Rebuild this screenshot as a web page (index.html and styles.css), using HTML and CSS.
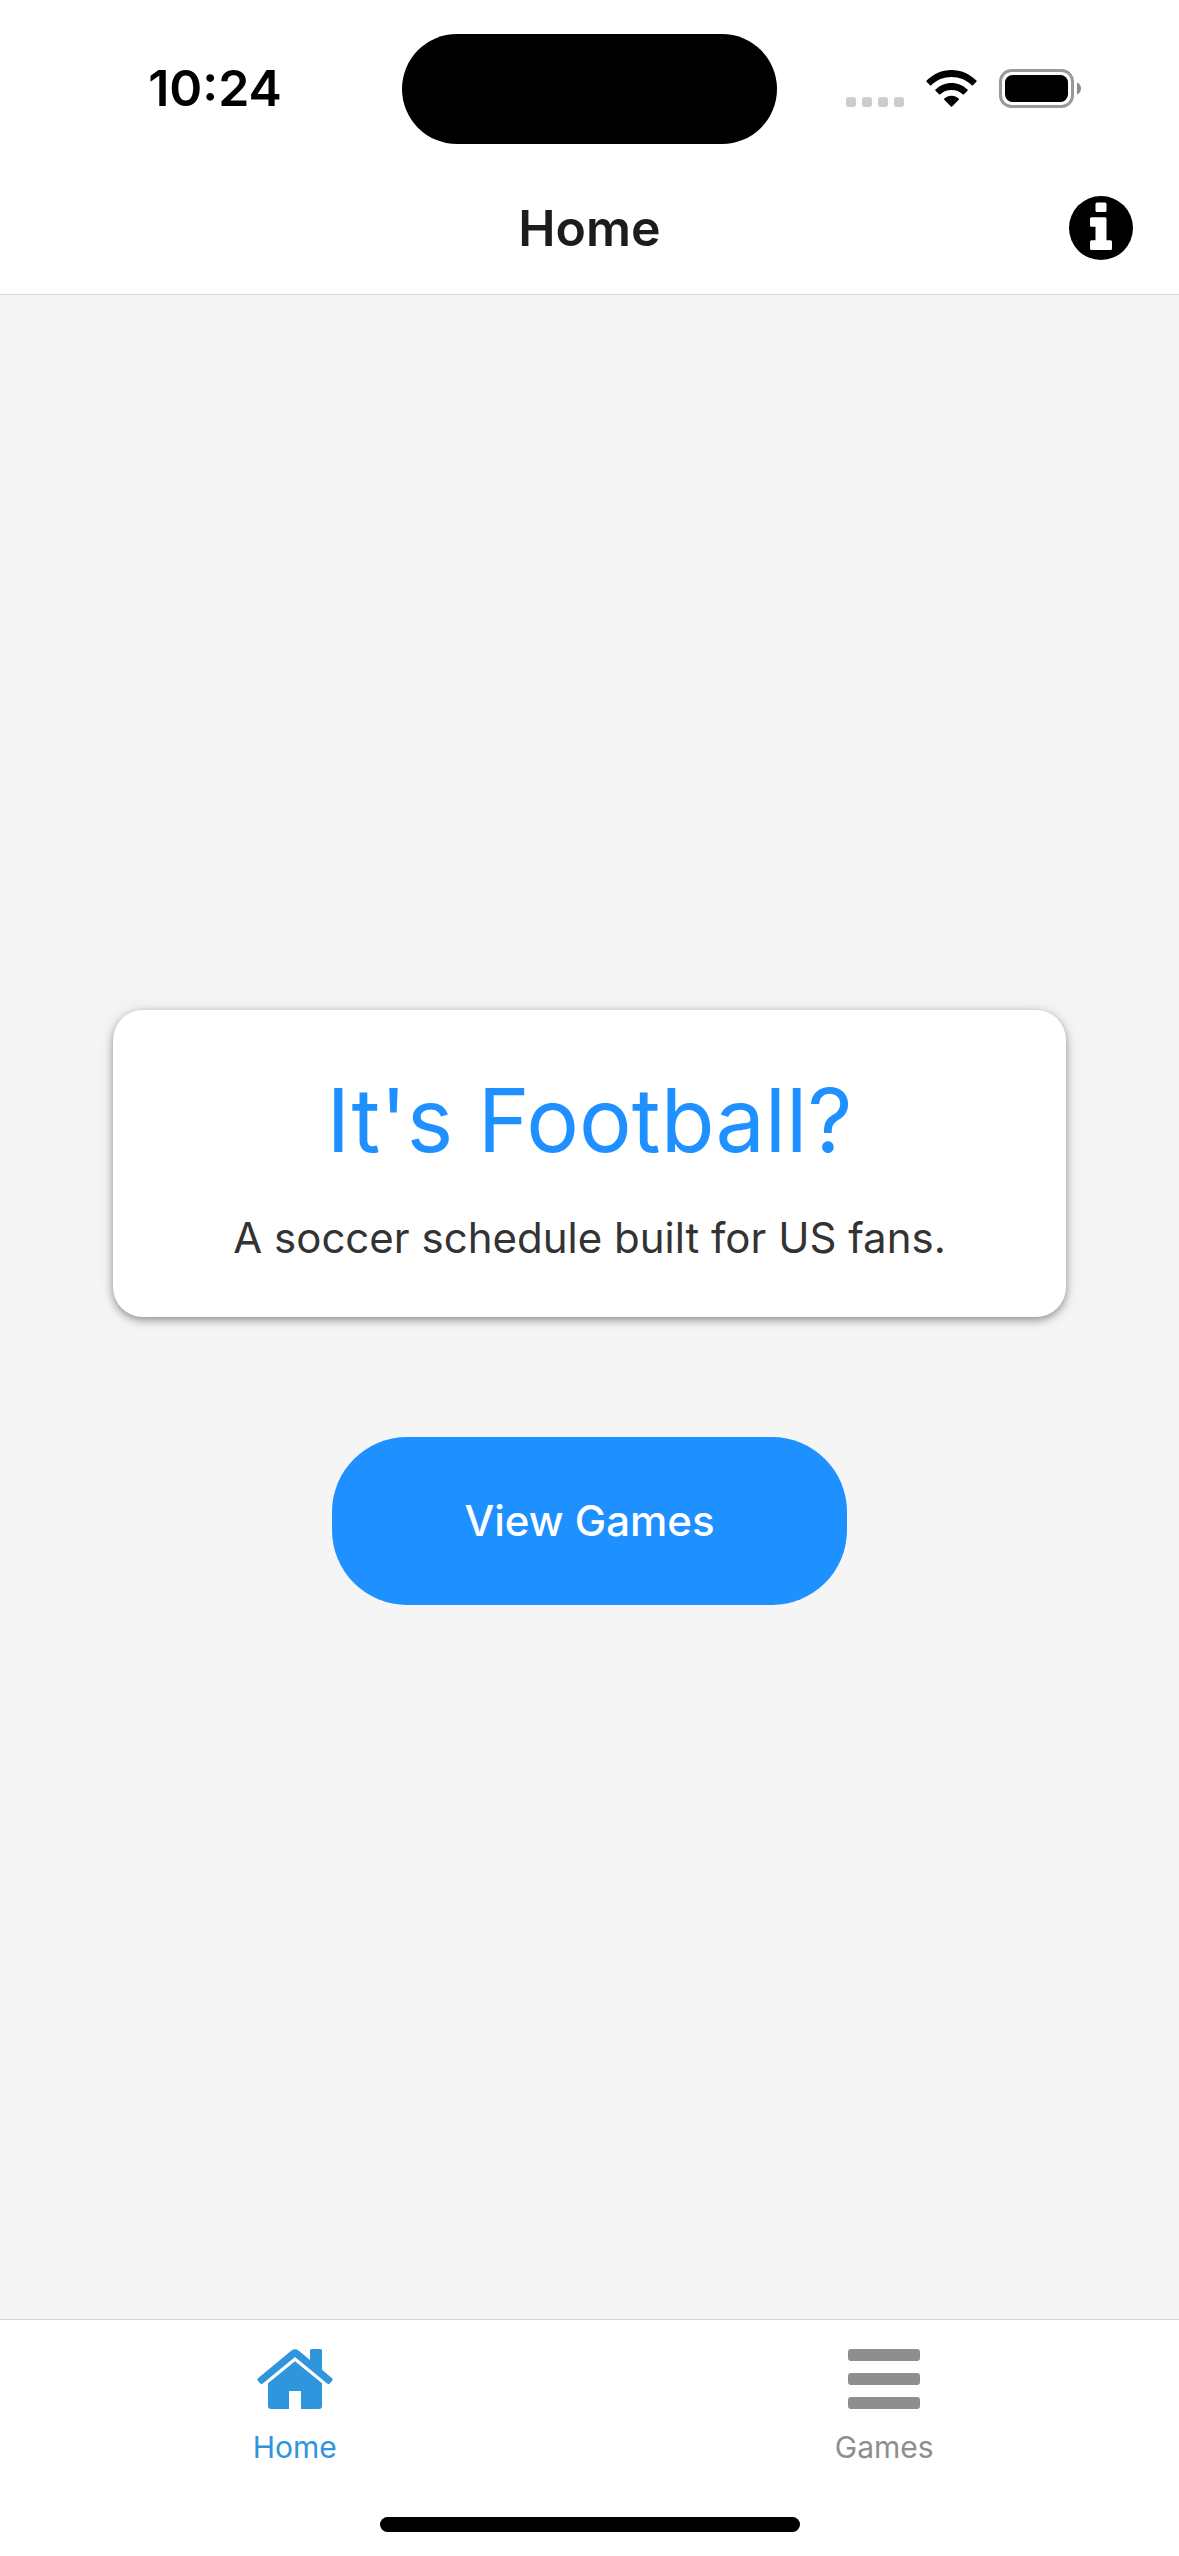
FILE: index.html
```html
<!DOCTYPE html>
<html lang="en">
<head>
<meta charset="utf-8">
<meta name="viewport" content="width=device-width, initial-scale=1">
<title>Home</title>
<link rel="stylesheet" href="styles.css">
</head>
<body>
<div class="app">
  <div class="status">
    <time class="status-time">10:24</time>
    <div class="island"></div>
    <div class="status-icons">
      <svg class="icon-signal" viewBox="0 0 58 37" aria-hidden="true">
        <g fill="#ccc">
          <rect x="0" y="27" width="10" height="10" rx="3"/>
          <rect x="16" y="27" width="10" height="10" rx="3"/>
          <rect x="32" y="27" width="10" height="10" rx="3"/>
          <rect x="48" y="27" width="10" height="10" rx="3"/>
        </g>
      </svg>
      <svg class="icon-wifi" viewBox="0 0 51 37" aria-hidden="true">
        <path d="M.6 10.6C7.300 4 16 0 25.500 0S43.700 4 50.400 10.600Q51 11.200 50.400 11.800L47 15.200Q46.400 15.800 45.700 15.200C40.300 10 33.200 7.100 25.500 7.100S10.700 10 5.300 15.200Q4.600 15.800 4 15.200L.6 11.800Q0 11.200.6 10.600Z"/>
        <path d="M9.500 19.500C13.700 15.400 19.300 12.900 25.500 12.900S37.300 15.400 41.500 19.500Q42.100 20.100 41.500 20.700L38 24.200Q37.400 24.800 36.700 24.200C33.800 21.500 29.900 20 25.500 20S17.200 21.500 14.300 24.200Q13.600 24.800 13 24.200L9.500 20.700Q8.900 20.100 9.500 19.500Z"/>
        <path d="M18.300 28.600C20.200 26.800 22.700 25.700 25.500 25.700S30.800 26.800 32.700 28.600Q33.300 29.200 32.700 29.800L26.100 36.600Q25.500 37.200 24.900 36.600L18.300 29.800Q17.700 29.200 18.300 28.600Z"/>
      </svg>
      <svg class="icon-battery" viewBox="0 0 82 39" aria-hidden="true">
        <rect x="1.500" y="1.500" width="72" height="36" rx="11" fill="none" stroke="#999" stroke-width="3"/>
        <rect x="6" y="6" width="63" height="27" rx="7.500"/>
        <path d="M78 13.500C80.500 14.500 82 16.800 82 19.500S80.500 24.500 78 25.500Z" fill="#8c8c8c"/>
      </svg>
    </div>
  </div>

  <header class="header">
    <h1 class="header-title">Home</h1>
    <button class="info" type="button" aria-label="Information">
      <svg class="icon-info" viewBox="0 0 64 64" aria-hidden="true">
        <circle cx="32" cy="32" r="32"/>
        <g fill="#fff">
          <rect x="26.500" y="6.500" width="11" height="9.500" rx="1.500"/>
          <path d="M22.500 21.300H36Q37.500 21.300 37.500 22.800V44.300H41.500Q43 44.300 43 45.800V52.500Q43 54 41.500 54H22.500Q21 54 21 52.500V45.800Q21 44.300 22.500 44.300H26.500V30.700H22.500Q21 30.700 21 29.200V22.800Q21 21.300 22.500 21.300Z"/>
        </g>
      </svg>
    </button>
  </header>

  <main class="main">
    <section class="card">
      <h2 class="card-title">It's Football?</h2>
      <p class="card-text">A soccer schedule built for US fans.</p>
    </section>
    <button class="view-games" type="button">View Games</button>
  </main>

  <nav class="tabs">
    <a class="tab tab-active" href="#home" aria-current="page">
      <svg class="icon-home" viewBox="0 0 76 60" fill="currentColor" aria-hidden="true">
        <path d="M11 34.300 38 12.300 65 34.300V57Q65 60 62 60H44V42H32V60H14Q11 60 11 57Z"/>
        <path d="M34.500 1.500Q38 -1.200 41.500 1.500L53 11V1.500Q53 0 54.500 0H63.500Q65 0 65 1.500V20.800L75 29.300Q76.200 30.400 75.200 31.700L72.600 34.500Q71.500 35.600 70.200 34.600L38 8 5.800 34.600Q4.500 35.600 3.400 34.500L.8 31.700Q-.2 30.400 1 29.300Z"/>
      </svg>
      <span>Home</span>
    </a>
    <a class="tab" href="#games">
      <svg class="icon-games" viewBox="0 0 72 60" fill="currentColor" aria-hidden="true">
        <rect width="72" height="12" rx="3"/>
        <rect y="24" width="72" height="12" rx="3"/>
        <rect y="48" width="72" height="12" rx="3"/>
      </svg>
      <span>Games</span>
    </a>
  </nav>
  <div class="home-bar"></div>
</div>
</body>
</html>
```

FILE: styles.css
```css
* {
  box-sizing: border-box;
}

body {
  margin: 0;
  background: #fff;
  font-family: Inter, "Liberation Sans", sans-serif;
}

h1, h2, p {
  margin: 0;
}

button {
  border: 0;
  font-family: inherit;
  cursor: pointer;
}

svg {
  display: block;
}

.app {
  display: flex;
  flex-direction: column;
  min-height: 100vh;
}

.status {
  display: grid;
  grid-template-columns: 1fr auto 1fr;
  align-items: center;
  padding: 34px 28px 0;
}

.status-time {
  padding-bottom: 2px;
  text-align: center;
  font-size: 50px;
  font-weight: 600;
  line-height: 60px;
}

.island {
  width: 375px;
  height: 110px;
  border-radius: 55px;
  background: #000;
}

.status-icons {
  display: flex;
  justify-content: flex-end;
  align-items: center;
  gap: 22px;
  padding: 0 70px 2px 0;
}

.icon-signal {
  width: 58px;
  height: 37px;
}

.icon-wifi {
  width: 51px;
  height: 37px;
}

.icon-battery {
  width: 82px;
  height: 39px;
}

.header {
  display: grid;
  grid-template-columns: 1fr auto 1fr;
  align-items: center;
  height: 151px;
  padding: 18px 46px 0;
  border-bottom: 1px solid #d8d8d8;
}

.header-title {
  grid-column: 2;
  color: #1c1c1e;
  font-size: 50px;
  font-weight: 600;
  line-height: 60px;
}

.info {
  justify-self: end;
  padding: 0;
  background: none;
}

.icon-info {
  width: 64px;
  height: 64px;
}

.main {
  display: flex;
  flex: 1;
  flex-direction: column;
  align-items: center;
  justify-content: center;
  gap: 120px;
  padding: 0 113px;
  background: #f5f5f5;
}

.card {
  width: 100%;
  padding: 54px 48px 49px;
  border-radius: 30px;
  background: #fff;
  box-shadow: 0 3px 9px rgba(0, 0, 0, 0.4), 0 0 24px rgba(0, 0, 0, 0.06);
  text-align: center;
}

.card-title {
  color: #1e90ff;
  font-size: 88px;
  font-weight: 400;
  line-height: 112px;
}

.card-text {
  margin-top: 32px;
  color: #333;
  font-size: 42px;
  line-height: 60px;
}

.view-games {
  padding: 54px 132px;
  border-radius: 75px;
  background: #1e90ff;
  color: #fff;
  font-size: 42px;
  font-weight: 500;
  line-height: 60px;
}

.tabs {
  display: flex;
  border-top: 1px solid #d8d8d8;
}

.tab {
  display: flex;
  flex: 1;
  flex-direction: column;
  align-items: center;
  gap: 20px;
  padding: 29px 0 52px;
  color: #8e8e8f;
  font-size: 30px;
  line-height: 36px;
  text-decoration: none;
}

.tab-active {
  color: #2f95dc;
}

.icon-home {
  width: 76px;
  height: 60px;
}

.icon-games {
  width: 72px;
  height: 60px;
}

.home-bar {
  align-self: center;
  width: 420px;
  height: 15px;
  margin-bottom: 24px;
  border-radius: 8px;
  background: #000;
}
```
